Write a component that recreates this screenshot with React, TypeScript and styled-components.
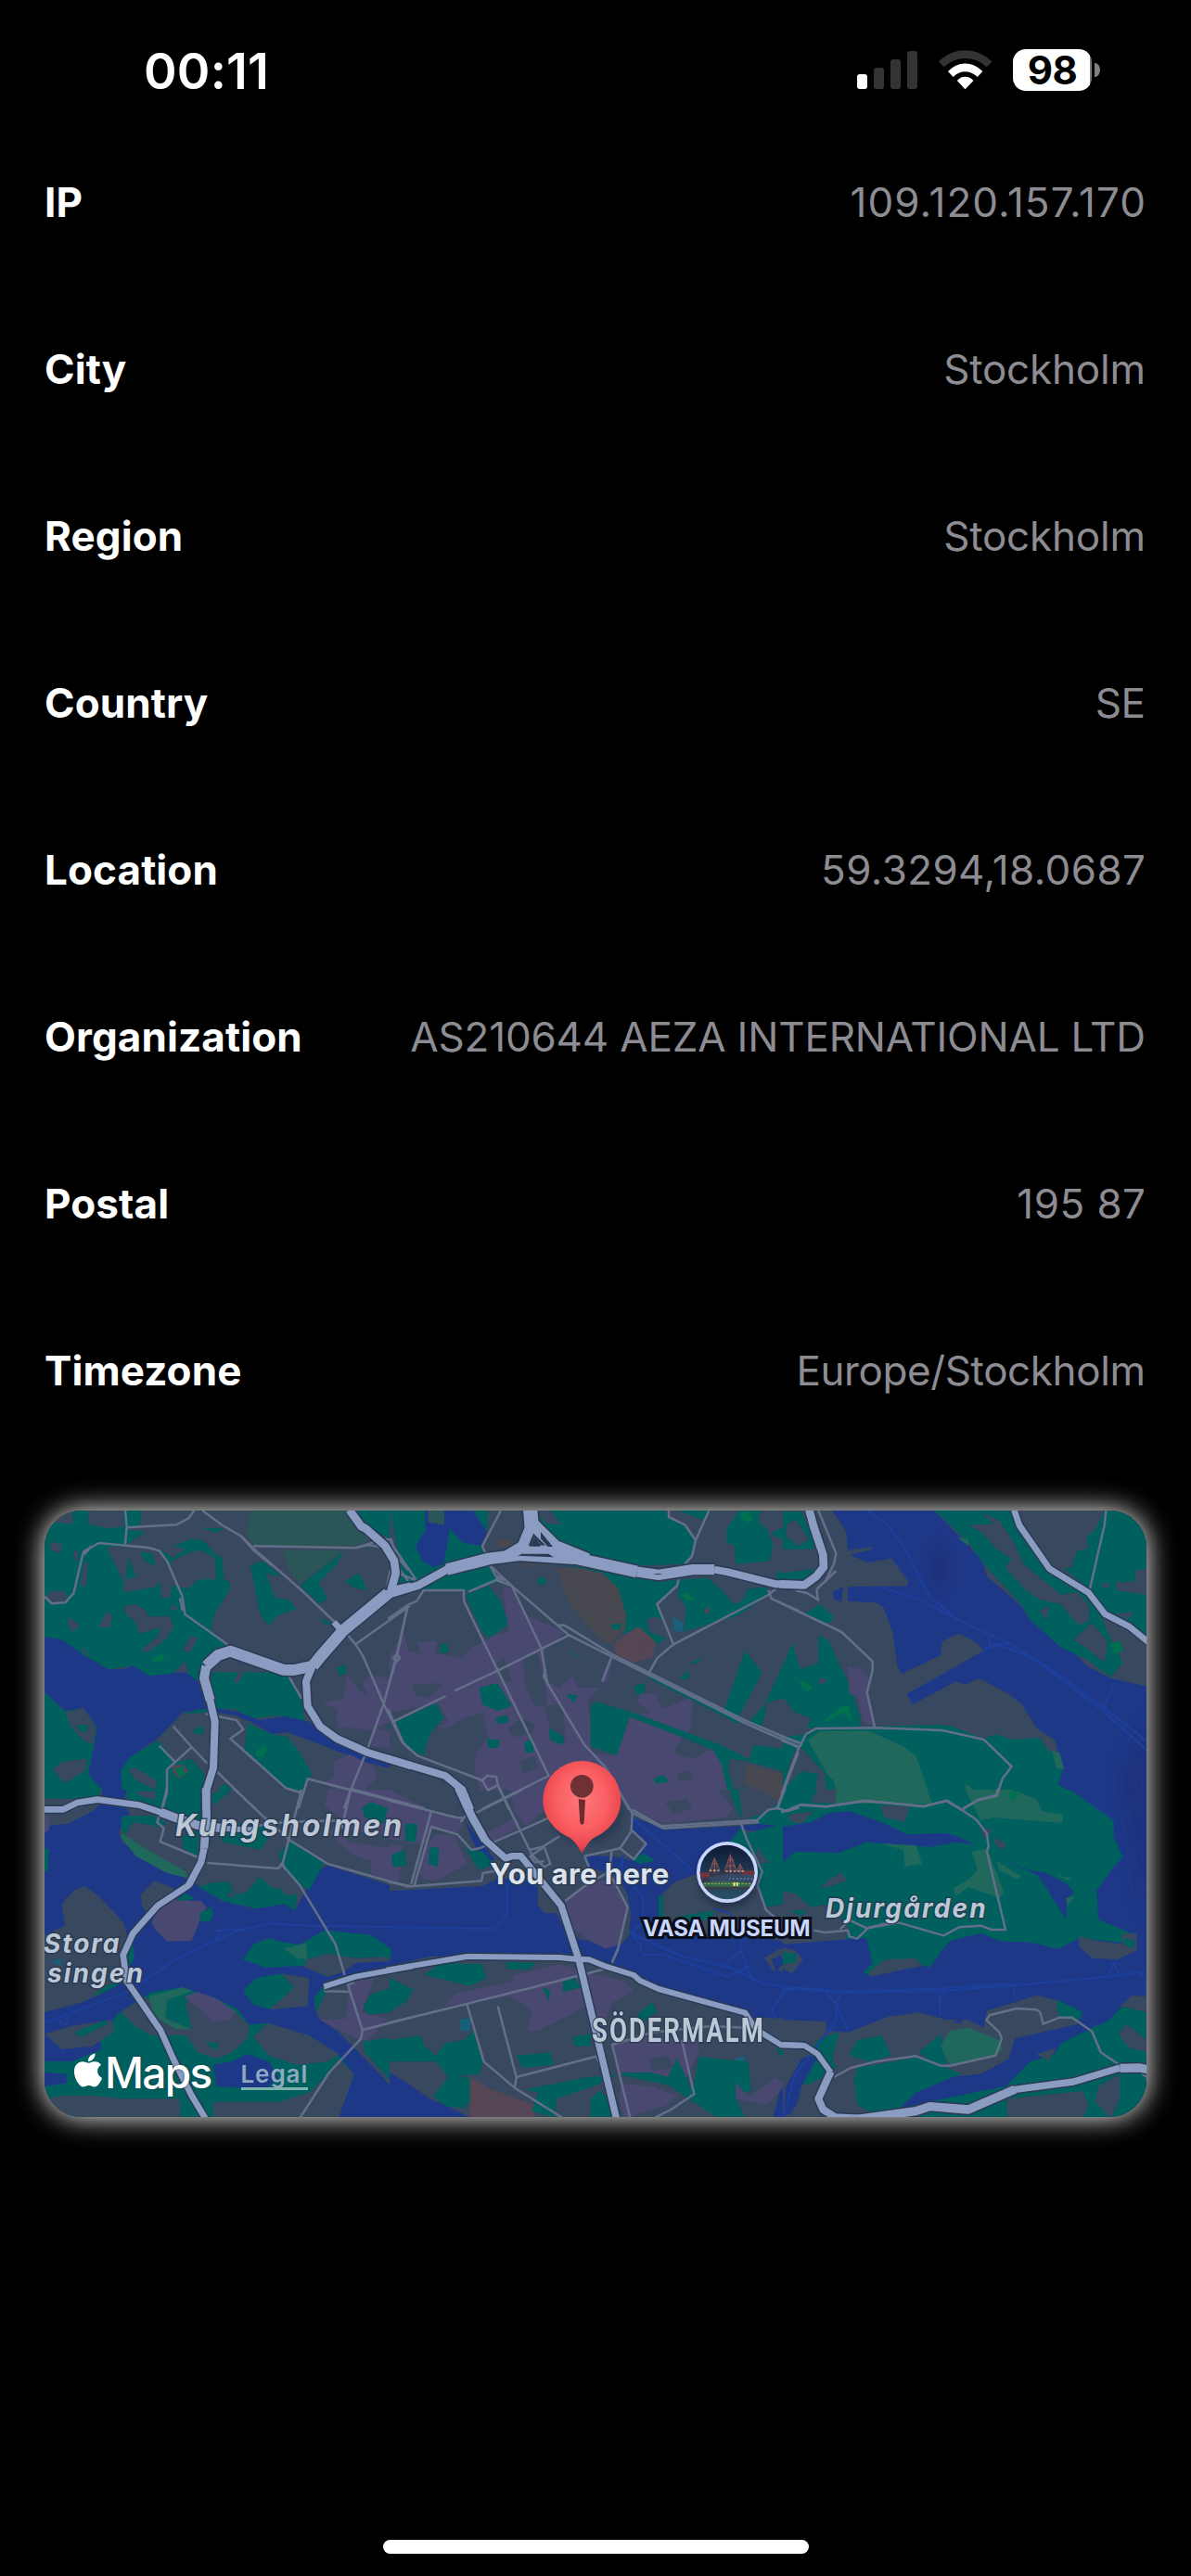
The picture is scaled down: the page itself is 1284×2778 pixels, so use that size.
import React from "react";
import styled, { createGlobalStyle } from "styled-components";
import { FaApple } from "react-icons/fa";

const GlobalStyle = createGlobalStyle`
  * { box-sizing: border-box; }
  html, body { margin: 0; background: #000; }
  body { font-family: Inter, "Liberation Sans", sans-serif; }
`;

const Screen = styled.main`
  width: 1284px;
  height: 2778px;
  display: flex;
  flex-direction: column;
  background: #000;
  overflow: hidden;
`;

const StatusBar = styled.header`
  height: 128px;
  flex: none;
  display: flex;
  justify-content: space-between;
  align-items: flex-start;
  padding: 44px 98px 0 155px;
`;

const Clock = styled.time`
  font-size: 54px;
  font-weight: 600;
  line-height: 66px;
  letter-spacing: 0.2px;
  color: #fff;
`;

const Indicators = styled.div`
  display: flex;
  align-items: center;
  gap: 23px;
  height: 45px;
  margin-top: 9px;
`;

const Battery = styled.div`
  display: flex;
  align-items: center;
  gap: 3px;
`;

const BatteryBody = styled.div`
  width: 85px;
  height: 45px;
  border-radius: 14px;
  background: linear-gradient(90deg, #fff 83px, #777 83px);
  color: #000;
  font-size: 42px;
  font-weight: 700;
  line-height: 45px;
  text-align: center;
  letter-spacing: -0.5px;
`;

const BatteryCap = styled.div`
  width: 6px;
  height: 15px;
  border-radius: 0 6px 6px 0 / 0 8px 8px 0;
  background: #808080;
`;

const Details = styled.dl`
  margin: 0;
  padding: 0 49px 0 48px;
  flex: none;
`;

const DetailRow = styled.div`
  height: 180px;
  display: flex;
  justify-content: space-between;
  align-items: center;
  font-size: 44px;
  white-space: nowrap;
`;

const Term = styled.dt`
  font-weight: 700;
  color: #fff;
  letter-spacing: 0.1px;
`;

const Value = styled.dd<{ $spacing: number }>`
  margin: 0;
  color: #8c8c92;
  font-weight: 400;
  letter-spacing: ${(p) => p.$spacing}px;
  margin-right: ${(p) => -p.$spacing}px;
`;

const MapCard = styled.section`
  position: relative;
  flex: none;
  width: 1188px;
  height: 654px;
  margin: 61px 48px 0;
  border-radius: 40px;
  box-shadow: 0 0 30px #fff;
`;

const MapClip = styled.div`
  position: relative;
  width: 100%;
  height: 100%;
  border-radius: 40px;
  overflow: hidden;
`;

const MapLabel = styled.span<{
  $x: number;
  $y: number;
  $size: number;
  $spacing?: number;
  $color?: string;
  $weight?: number;
  $italic?: boolean;
  $halo?: string;
  $haloWidth?: number;
  $squeeze?: number;
  $family?: string;
}>`
  position: absolute;
  left: ${(p) => p.$x}px;
  top: ${(p) => p.$y}px;
  font-family: ${(p) => p.$family ?? "Inter"}, "Liberation Sans", sans-serif;
  font-size: ${(p) => p.$size}px;
  line-height: ${(p) => p.$size}px;
  font-weight: ${(p) => p.$weight ?? 700};
  font-style: ${(p) => (p.$italic ? "italic" : "normal")};
  letter-spacing: ${(p) => p.$spacing ?? 0}px;
  color: ${(p) => p.$color ?? "#bcc8d6"};
  white-space: nowrap;
  -webkit-text-stroke: ${(p) => p.$haloWidth ?? 3}px ${(p) => p.$halo ?? "rgba(38,54,78,0.75)"};
  paint-order: stroke fill;
  transform: scaleX(${(p) => p.$squeeze ?? 1});
  transform-origin: 0 0;
`;

const Attribution = styled.div`
  position: absolute;
  left: 29px;
  bottom: 23px;
  display: flex;
  align-items: center;
  color: #fff;
  font-size: 46px;
  font-weight: 500;
  line-height: 50px;
  letter-spacing: -1.7px;
  text-shadow: 0 0 3px rgba(20, 40, 60, 0.6);
`;

const AppleMark = styled(FaApple)`
  width: 36px;
  height: 41px;
  margin-top: -5px;
`;

const LegalLink = styled.a`
  margin-left: 32px;
  margin-top: 6px;
  font-size: 26px;
  line-height: 29px;
  font-weight: 600;
  letter-spacing: 0.9px;
  color: #8fa9c0;
  border-bottom: 3px solid #7fb3b0;
  text-shadow: none;
`;

const HomeIndicator = styled.div`
  width: 459px;
  height: 15px;
  border-radius: 8px;
  background: #fff;
  margin: auto auto 24px;
  flex: none;
`;

const C = {
  land: "#38485f",
  park: "#00605e",
  water: "#1e3888",
  city: "#494870",
  meadow: "#20675c",
  field: "#2a5658",
  sport: "#00704f",
  brown: "#484950",
  rust: "#544655",
  pool: "#18607a",
};

type Kind = keyof typeof C;
type Shape = [Kind, string];
type Road = [number, string];

interface Tile {
  x: number;
  y: number;
  w: number;
  h: number;
  base: Kind;
  shapes: Shape[];
  major: Road[];
  minor: string[];
  ferry: string[];
}

/* Each tile is digitised at three units per screen pixel. */
const tiles: Tile[] = [
  {
    x: 0, y: 1580, w: 1263, h: 1053, base: "land",
    shapes: [
      ["park", "144,147 455,147 455,190 410,210 470,215 405,262 520,275 560,300 600,270 560,262 620,238 660,245 700,290 720,300 725,370 745,380 740,410 700,470 680,530 735,580 700,600 650,650 640,700 480,690 430,650 350,660 280,620 220,580 144,560"],
      ["land", "285,147 400,147 400,200 345,205 285,190"],
      ["land", "180,155 235,152 235,190 175,185"],
      ["land", "345,265 400,262 515,275 545,320 560,370 550,430 520,430 520,380 500,395 400,412 398,370 370,320"],
      ["park", "415,300 440,362 405,370"],
      ["park", "450,280 490,285 505,330 470,310"],
      ["land", "555,310 620,280 650,275 695,300 700,370 640,370 610,400 560,390 545,340"],
      ["land", "160,250 200,255 195,285 165,275"], ["land", "240,280 255,275 250,310 238,305"],
      ["land", "270,320 285,310 280,390 258,390"], ["land", "160,410 200,405 220,425 200,450 165,450 150,430"],
      ["land", "225,490 258,520 235,540 220,515"], ["land", "345,475 365,490 355,525 318,525"],
      ["land", "400,455 440,450 470,470 480,490 550,490 562,520 540,560 480,605 455,600 510,555 520,525 450,545 440,510 405,480"],
      ["land", "620,550 640,560 615,605 590,600"], ["land", "600,635 612,677 560,672"], ["land", "258,588 280,600 285,622"],
      ["land", "550,465 560,450 575,465 560,470"],
      ["sport", "490,625 530,610 530,630 500,640"],
      ["water", "144,556 200,565 280,620 350,660 400,660 430,648 480,682 600,670 640,700 670,790 590,800 510,885 420,945 390,990 400,1060 400,1110 330,1110 330,1050 285,1000 285,920 315,850 270,790 210,795 144,735"],
      ["park", "144,735 210,797 270,785 315,850 300,930 285,1000 330,1050 330,1080 144,1080"],
      ["land", "215,800 270,785 312,850 300,905 270,890 225,840"], ["park", "250,840 285,840 280,865 255,860"],
      ["land", "170,985 200,960 280,950 280,985 210,1030"],
      ["park", "390,990 420,945 510,890 540,925 565,960 620,950 660,1000 655,1110 400,1110"],
      ["land", "415,985 440,980 505,1020 505,1050 440,1020"], ["park", "630,850 660,845 655,870 625,870"],
      ["park", "700,1050 730,1030 760,1060 720,1110 690,1110"],
      ["rust", "555,970 592,970 610,990 580,1015 560,995"], ["sport", "565,980 590,975 600,1000 580,1010"],
      ["park", "680,670 900,670 940,690 975,760 985,830 900,810 820,820 760,790 700,790"],
      ["land", "780,655 805,650 770,705 755,700"], ["park", "590,805 640,790 670,790 670,800"],
      ["water", "700,788 760,795 840,825 920,812 1000,830 1060,870 1180,940 1320,980 1320,995 1180,960 1000,890 930,865 880,870 820,835 760,810 700,800"],
      ["park", "800,835 880,870 930,880 970,930 1010,1000 990,1020 975,1060 925,1045 790,930"],
      ["sport", "828,925 855,905 866,915 850,945 830,940"],
      ["park", "650,203 725,205 700,218"], ["park", "810,325 850,310 910,360 860,350 890,430 935,435 960,465 900,485 870,520 840,480"],
      ["field", "810,147 1115,147 1200,240 1150,262 825,262 797,230"], ["field", "915,275 1110,275 970,385 930,330"],
      ["park", "970,390 1110,280 1090,320 1030,380 1060,430 1035,450"], ["park", "1115,375 1160,350 1190,405 1140,395"],
      ["park", "1150,147 1320,147 1320,330 1270,250 1250,235 1190,195"], ["park", "1035,490 1075,515 1050,515"],
      ["park", "1090,655 1115,645 1120,670 1100,685"],
      ["city", "1290,540 1320,540 1320,800 1220,850 1200,860 1140,850 1090,850 1090,790 1040,770 1110,755 1120,680 1150,710 1160,730 1190,745 1170,700 1200,680 1270,690"],
      ["city", "1210,850 1280,870 1300,920 1200,910"],
      ["city", "1080,960 1130,935 1210,975 1220,1010 1180,1050 1100,1110 1050,1080 1090,1050 1040,1030 1080,1010"],
      ["park", "1270,830 1320,810 1320,870 1250,850"],
    ],
    major: [
      [26, "1130,145 1168,198 1182,205 1245,260 1275,310 1280,350 1265,405"],
      [26, "1330,392 1285,402 1250,418"],
      [38, "1255,415 1110,535 1040,615 1012,650"],
      [36, "1012,650 950,663 915,662 745,602 705,615 667,650"],
      [30, "667,650 660,690 680,760"],
      [24, "678,755 695,830 690,980 668,1050 666,1112"],
      [24, "1010,650 990,700 995,780 1035,845 1090,885 1190,930 1330,973"],
      [20, "1080,508 1100,530"],
    ],
    minor: [
      "405,147 410,200 405,258", "410,202 570,193 610,172 628,147",
      "144,425 168,448 210,445 238,415 270,280 320,252 480,267 515,277 540,310 590,425 598,482 735,580",
      "272,290 295,262", "582,430 590,470", "655,147 715,192 780,230 820,270 970,400 1085,510", "780,230 820,275 880,325",
      "820,262 1150,268 1240,240 1265,240 1280,290 1320,340", "1150,268 1190,258 1240,266", "1280,320 1320,375", "1262,340 1252,390",
      "1125,550 1150,580 1175,620 1240,770 1300,895 1325,920", "1150,580 1325,455",
      "1318,455 1283,620 1240,775 1190,915 1135,1050 1112,1112", "1283,612 1294,624 1283,636 1272,624 1283,612",
      "560,845 620,912 670,965", "700,990 825,1112", "515,908 568,962", "620,912 540,985 540,1060 525,1112",
      "665,805 765,825 787,855 745,885 925,1045 975,1060", "1325,1100 995,1015 965,1112", "935,685 975,755",
    ],
    ferry: [],
  },
  {
    x: 420, y: 1580, w: 1275, h: 1053, base: "land",
    shapes: [
      ["park", "0,147 320,147 315,215 295,262 310,280 180,330 100,375 0,420 40,340"],
      ["land", "360,147 335,190 300,262 310,285 390,262 430,225 435,147"],
      ["water", "115,147 270,147 315,215 295,262 235,250 195,205 175,320 140,330 105,310 85,260 115,215"],
      ["field", "125,147 177,147 177,193 125,185"],
      ["park", "480,147 895,147 900,170 955,190 990,240 975,300 960,320 800,325 660,295 550,250 495,190"],
      ["land", "480,147 520,147 555,192 505,190"], ["brown", "345,245 370,237 398,245 395,262 340,268"],
      ["park", "1090,205 1130,147 1200,147 1230,230 1240,260 1230,310 1120,320 1115,260 1090,250"],
      ["land", "1195,160 1215,150 1250,180 1230,215 1195,185"],
      ["sport", "1130,160 1160,150 1175,175 1155,188"], ["park", "930,147 1030,147 1020,180"],
      ["park", "1240,215 1280,200 1285,240 1240,230"], ["park", "1255,345 1320,340 1320,375 1250,370"],
      ["park", "540,325 620,330 700,345 870,378 940,370 930,395 865,445 885,500 855,490 830,500 840,540 895,560 865,580 810,525 760,545 760,480 740,400 690,350 630,335"],
      ["brown", "540,330 620,335 690,350 740,400 765,485 760,530 720,575 690,570 600,470 575,430"],
      ["brown", "415,320 500,320 440,330"], ["park", "715,515 750,512 745,535 722,530"],
      ["rust", "725,575 805,522 860,570 850,620 790,640 730,610"], ["rust", "825,580 860,575 850,625 815,620"],
      ["park", "940,370 1030,365 1080,410 1110,450 1140,440 1160,400 1220,395 1225,420 1130,485 950,540 960,460 930,420"],
      ["sport", "945,420 960,412 990,435 960,440"], ["pool", "915,490 950,510 945,540 920,535"], ["rust", "1015,470 1035,458 1030,485"],
      ["park", "150,350 320,325 360,375 255,410 110,402"], ["park", "245,420 320,390 360,440 385,515 320,560 300,540 275,490"],
      ["park", "475,375 490,358 508,375 490,392"],
      ["city", "0,620 45,540 60,600 100,610 90,570 150,570 150,610 235,625 270,590 350,545 385,540 365,395 395,395 450,490 570,540 500,600 510,700 550,720 590,680 610,720 650,720 720,630 710,690 640,760 650,830 650,930 730,940 780,810 850,800 800,770 810,740 860,740 880,790 980,750 975,850 940,890 920,930 980,950 1060,910 1100,1000 1110,1110 780,1110 700,980 640,1050 300,1080 270,970 290,900 240,860 140,855 190,830 160,770 0,800"],
      ["land", "70,710 170,705 130,755 85,745"], ["land", "430,620 480,610 505,720 510,780 470,780 440,720"],
      ["land", "240,820 300,800 320,880 280,930 270,1000 130,960 130,850 190,850"], ["land", "500,780 560,770 570,900 520,850"],
      ["land", "345,640 370,620 395,700 370,700"], ["land", "380,850 430,820 470,840 460,870 400,880"], ["land", "420,960 470,940 480,980 430,1000"], ["land", "640,640 700,620 690,720 620,720 610,690"],
      ["park", "165,580 185,575 190,605 165,610"], ["park", "290,720 350,705 395,780 350,795 300,775"],
      ["park", "342,818 380,808 387,830 350,838"], ["park", "315,885 355,890 350,915 320,915"], ["park", "435,900 465,880 465,930 440,930"],
      ["park", "515,850 565,880 560,905 520,890"], ["park", "572,740 608,745 595,770"], ["park", "575,590 625,630 600,615"],
      ["park", "650,780 670,765 780,805 735,940 650,910"], ["park", "20,830 150,770 175,815 130,870 110,940 60,920"],
      ["park", "790,715 825,705 825,735 800,745"], ["park", "855,1015 885,1002 905,1025 860,1030"],
      ["land", "945,905 990,895 1010,940 950,945"], ["land", "930,1000 970,990 980,1015 940,1025"],
      ["park", "700,775 800,805 1070,905 1150,945 1170,960 1100,950 1095,985 1130,1110 1105,1110 1075,970 1045,920 920,870 790,820"],
      ["park", "1180,905 1290,920 1270,990 1160,960"], ["brown", "1160,970 1280,1000 1250,1090 1145,1030"],
      ["park", "1125,1045 1200,1060 1180,1068"],
      ["park", "1080,800 1120,680 1150,600 1180,640 1205,670 1180,720 1130,810"], ["park", "1150,840 1220,770 1215,810 1200,850"],
      ["park", "1215,770 1300,580 1320,590 1320,750 1250,760"], ["park", "935,690 970,665 965,695"], ["park", "970,640 1015,622 990,642"],
      ["park", "835,675 1140,825 1130,838 840,690"],
    ],
    major: [
      [26, "-10,420 95,388 190,335"], [38, "185,338 320,303 420,290 610,303 800,345"],
      [34, "800,345 870,355 980,338 1050,338"], [24, "1050,338 1095,346 1250,385 1335,388"],
      [46, "455,145 460,205"], [34, "460,190 430,262 380,292"], [40, "462,190 535,262 640,305"], [22, "420,272 540,270"],
      [24, "-10,948 180,1005 235,1050 262,1115"],
    ],
    minor: [
      "360,147 300,262 310,285", "325,325 350,370 372,365", "240,440 240,405 110,405 88,440 60,452 -5,497", "60,452 22,620 -5,720",
      "255,410 345,372 395,390 490,590 510,705 630,905 700,980 775,1115", "345,372 350,360 370,375", "325,325 400,395 580,550 1150,835 1325,912",
      "545,518 565,518 720,612 1150,826 1325,900", "240,440 350,665 515,1005 300,1112", "580,550 350,665 210,730", "182,747 12,830",
      "-5,790 45,900 90,940 300,1020 315,1005 345,1008 350,1035 318,1052 300,1020", "350,1035 387,1115", "720,615 688,700", "505,660 498,685 512,705",
      "903,147 903,168 955,193 990,243", "1033,147 990,243 978,295 955,320", "935,370 930,390 865,450 918,580 865,625 835,680",
      "918,580 1225,420 1250,400", "1225,405 1235,432 1325,472", "1322,930 1252,1112", "0,240 12,262 85,370", "25,350 85,372", "-5,1082 110,1110",
    ],
    ferry: [],
  },
  {
    x: 844, y: 1580, w: 1176, h: 1053, base: "land",
    shapes: [
      ["water", "160,147 490,147 530,190 600,260 645,310 660,360 770,455 800,500 890,580 940,605 985,650 1060,690 1176,715 1176,1110 985,1110 960,1070 890,1035 905,985 890,930 880,890 850,880 820,850 770,770 720,735 635,690 590,710 560,700 420,775 400,740 510,680 650,600 620,570 570,545 515,570 510,615 385,675 370,650 355,540 325,460 300,445 210,440 210,395 310,385 400,390 405,375 350,300 270,315 220,290 290,270 210,275 205,215"],
      ["land", "205,277 286,264 286,274 240,282 290,310 350,302 405,378 400,391 210,393"],
      ["water", "217,290 270,278 350,302 275,315"], ["water", "160,410 195,393 190,443 165,435"],
      ["park", "490,147 700,147 780,260 830,330 1000,420 1060,560 1100,640 1060,685 985,630 900,590 800,500 770,450 650,320 600,250"],
      ["land", "640,150 700,180 740,240 780,320 840,370 900,420 950,410 990,450 990,500 960,520 930,490 900,450 830,435 780,400 720,330 740,305 690,270 640,215 600,195 680,190"],
      ["park", "700,147 740,147 790,240 860,345 950,405 900,420 840,370 780,320 745,240"],
      ["land", "830,470 860,455 855,500"], ["land", "940,565 1000,510 1050,570 1040,640 980,590"],
      ["park", "1040,147 1130,147 1176,200 1176,550 1130,520 1040,470 1000,410 910,335 935,330 950,280 985,270 985,230 1010,210"],
      ["land", "1140,340 1176,335 1176,420 1080,405 1075,380 1140,375"], ["land", "1025,388 1060,378 1050,400"], ["land", "1075,480 1135,475 1115,500"],
      ["land", "1130,155 1160,170 1165,195"],
      ["sport", "1055,575 1090,570 1102,600 1075,612"], ["meadow", "565,235 600,240 600,262"],
      ["park", "0,150 60,150 100,240 100,272 0,272"], ["land", "10,195 40,175 85,240 50,262 10,230"], ["park", "0,350 100,335 100,372 0,375"],
      ["park", "65,485 120,450 165,490 150,512"],
      ["park", "115,550 150,570 180,640 210,700 250,810 250,850 75,850 90,820 40,800 0,750 0,650 30,575 50,640 60,660 115,640"],
      ["land", "118,690 140,690 135,710 118,705"], ["land", "0,770 40,800 90,820 70,870 0,880"],
      ["sport", "50,705 70,700 95,718 80,735"], ["sport", "135,825 190,780 215,780 222,830 195,800 145,832"],
      ["city", "210,650 250,660 280,690 275,750 300,845 260,830 240,745 215,740"],
      ["park", "75,870 110,850 510,840 545,845 650,885 690,870 740,888 830,883 880,930 905,985 890,1035 960,1070 990,1110 0,1110 0,880"],
      ["land", "820,850 880,890 885,930 860,925 830,885"],
      ["meadow", "80,890 120,860 280,860 390,910 430,940 490,1110 170,1110 150,1010"],
      ["land", "50,905 130,990 170,1040 170,1110 90,1110 115,1000 60,990 0,1050 30,940"],
      ["park", "135,1000 165,1020 168,1062 140,1050"],
      ["meadow", "590,1028 650,1075 840,1075 840,1110 600,1110"], ["meadow", "870,925 895,930 910,985 885,980"], ["sport", "725,1065 745,1045 765,1065 745,1090"],
    ],
    major: [
      [26, "85,145 100,200 130,290 132,330 108,360 70,388 -10,385"],
      [20, "748,145 765,195 862,335 988,412 1042,482 1120,522 1185,575"],
    ],
    minor: [
      "115,147 172,285 165,320 138,375 110,400 112,435", "172,342 135,378", "40,405 80,415 118,438", "-5,447 190,540 290,635 290,665 272,735 297,848",
      "-5,878 60,900", "-5,890 52,914 60,900", "52,914 -5,1065",
      "55,910 75,870 108,852 300,850 515,858 650,888 740,975 710,1015 692,1070 630,1083 578,1115 530,1085 455,1105 265,1085 140,1105 60,1100",
      "1045,147 1040,195 992,405",
    ],
    ferry: [
      "275,147 340,195 395,270 475,425 560,495", "310,393 445,435 570,503 740,580 905,685 1180,895", "668,548 668,585 650,600",
      "668,585 700,578 740,580", "650,600 690,585 720,588 820,632 1040,800 1180,925", "1072,705 1040,775 1050,800", "1015,775 1040,775",
    ],
  },
  {
    x: 0, y: 1930, w: 1263, h: 1062, base: "water",
    shapes: [
      ["land", "144,0 330,0 330,40 300,70 220,110 165,115 144,130"], ["park", "144,0 330,0 320,20 220,30 144,28"],
      ["city", "144,85 160,85 158,130 144,140"],
      ["land", "395,110 420,80 400,40 410,0 1270,0 1270,312 1060,245 1030,260 985,330 955,390 920,370 830,385 720,360 640,310 600,285 500,235 395,170 385,140"],
      ["park", "408,0 655,0 650,100 560,90 450,50 410,40"], ["land", "440,5 500,5 505,30 460,25"],
      ["park", "395,85 500,85 540,110 520,120 430,105 400,150 390,110"],
      ["meadow", "388,150 400,145 470,190 600,265 605,285 540,270 440,215"], ["park", "590,150 640,130 640,215 590,190"],
      ["park", "690,50 750,0 720,0 685,15"], ["park", "700,110 860,110 870,150 845,195 720,170"],
      ["park", "940,165 1050,235 1000,325 960,300 920,260 900,210"],
      ["park", "640,315 690,300 740,298 760,340 800,330 840,282 880,318 910,320 920,340 960,340 955,392 920,370 830,385 720,360"],
      ["land", "735,345 745,325 760,352"],
      ["city", "1060,0 1270,0 1270,300 1200,270 1200,230 1140,210 1060,140 1105,100 1050,50"],
      ["land", "1090,130 1270,150 1270,190 1130,170"], ["park", "1170,60 1200,40 1255,60 1240,110 1180,90"],
      ["land", "275,312 320,345 400,430 410,470 430,540 410,590 390,620 330,660 260,690 144,720 144,470 210,440 200,370 240,325"],
      ["park", "295,670 345,632 400,620 350,650"], ["pool", "160,552 200,548 195,570"], ["park", "420,480 435,520 430,560 410,575"], ["park", "144,190 158,190 155,260 144,265"],
      ["land", "455,340 500,295 540,310 590,335 560,370 490,410 460,380"], ["park", "555,370 600,335 630,350 580,370"],
      ["city", "490,430 520,370 560,358 650,360 668,380 650,410 640,440 620,490 540,490 500,450"], ["park", "645,400 685,378 688,405 680,428 650,425"],
      ["park", "785,550 820,500 870,480 920,495 970,500 1050,455 1200,470 1270,520 1260,550 1150,545 1110,590 1060,605 980,570 860,575"],
      ["land", "990,550 1060,530 1150,545 1250,540 1260,555 1150,560 1110,590 1060,605 985,575"], ["meadow", "920,515 990,495 995,550 960,545"],
      ["park", "785,650 830,610 910,595 1000,610 990,700 880,712 820,695"], ["land", "910,595 1000,610 995,700 870,712 920,670 950,640"],
      ["park", "380,725 490,655 590,640 710,680 770,710 805,760 865,755 1000,795 1095,860 1145,920 1095,1062 144,1062 144,960 215,950 215,920 144,915 144,880 230,880 330,840 320,800 370,740"],
      ["water", "690,890 750,880 800,855 870,880 900,930 860,970 700,960"],
      ["land", "390,720 470,670 540,740 620,775 600,690 640,660 760,720 805,760 800,805 750,850 700,870 640,850 600,795 490,795 445,770"],
      ["meadow", "480,670 590,640 622,652 540,680 535,740 620,775 570,775 500,735"], ["city", "595,670 640,655 700,675 765,720 740,745 690,755 650,710"],
      ["park", "665,815 705,820 705,840 685,838"],
      ["land", "820,800 865,755 1000,795 1095,855 1060,880 960,890 870,860"],
      ["land", "690,1010 900,1010 1000,980 1060,920 1095,870 1145,920 1095,1062 690,1062"], ["land", "144,1000 200,990 300,990 400,1000 580,1000 585,1062 190,1062"],
      ["land", "144,790 230,765 360,745 370,780 300,830 200,840"], ["park", "240,785 340,745 350,758 260,800"],
      ["land", "1015,690 1050,620 1120,600 1270,590 1270,965 1200,890 1150,840 1090,780 1030,740"],
      ["park", "1055,625 1115,600 1145,620 1060,645 1022,720 1018,670"],
      ["city", "1130,620 1210,610 1170,720 1250,740 1210,790 1180,815 1120,790 1035,745 1120,740"],
      ["park", "1175,700 1200,660 1270,640 1270,720 1190,728"], ["park", "1175,815 1270,800 1270,950 1180,850"],
    ],
    major: [
      [20, "140,64 205,64 250,42 315,32 450,50 525,75"], [28, "520,73 570,92 640,115 720,125"], [18, "720,125 800,130 825,128"],
      [26, "666,-5 668,90 660,190"], [22, "660,190 650,235 610,310"], [20, "612,308 510,375 430,465 398,535 410,620 520,780 560,870 620,990 668,1070"],
      [18, "1048,637 1150,605 1335,571"],
    ],
    minor: [
      "540,-5 525,55 508,105 530,125 518,168 655,225", "670,237 900,255 915,235 975,0", "900,255 915,240 922,258", "755,-5 850,85 940,165 1060,240 1325,315",
      "1105,125 1135,-2 1325,48", "935,-2 975,10", "910,240 970,310 1085,500 1115,600", "1050,640 1052,652 1130,654", "1145,625 1125,630 1172,778 1168,805 1065,915 970,1062",
      "1172,778 1325,738", "825,118 920,105 1105,100", "655,165 695,140",
    ],
    ferry: ["144,752 215,728 410,655 575,545 760,460 870,433 1000,440 1265,444", "695,457 800,450", "710,457 695,490", "180,742 215,762 218,730"],
  },
  {
    x: 420, y: 1930, w: 1275, h: 1062, base: "land",
    shapes: [
      ["city", "0,0 140,70 240,100 220,145 130,120 125,180 0,160"], ["city", "80,240 150,145 210,150 250,240 150,295 110,290"],
      ["city", "390,0 480,0 530,0 530,60 480,80 440,120 400,60"], ["city", "255,150 330,130 410,90 425,120 310,180"], ["city", "0,180 40,180 30,300 0,290"],
      ["park", "50,110 90,110 85,170 50,165"], ["park", "5,210 50,195 55,245 10,250"], ["park", "130,185 160,190 155,250 125,240"],
      ["city", "740,0 1060,0 1110,60 1090,90 890,110 790,70"], ["land", "890,40 960,30 980,60 920,80"], ["park", "1100,0 1130,0 1140,100 1120,60"],
      ["park", "1165,90 1230,70 1275,20 1275,120 1180,115"], ["brown", "1200,0 1275,0 1260,38"],
      ["water", "205,0 250,110 290,160 340,225 310,240 265,160 240,90"], ["park", "245,190 300,200 340,240 290,260 270,230"],
      ["water", "0,328 300,312 345,290 420,285 460,290 480,320 478,370 500,400 540,400 560,440 600,480 690,500 750,500 775,470 780,400 770,340 740,280 640,250 640,215 720,215 790,230 830,180 785,125 785,90 830,105 890,130 1130,118 1200,110 1275,120 1320,115 1320,225 1200,200 1190,300 1240,430 1320,490 1320,740 1180,738 1140,715 880,640 800,600 720,565 650,545 440,545 250,535 130,540 0,570"],
      ["city", "560,370 640,300 720,290 770,380 745,500 700,515 650,490 580,440"],
      ["land", "870,350 920,300 1000,270 1080,180 1150,130 1275,150 1275,490 1180,475 950,470 880,430"],
      ["park", "870,345 885,340 885,430 870,430"], ["park", "1190,240 1275,230 1275,370 1220,380 1195,320"], ["park", "1085,185 1140,120 1190,180 1180,240 1130,180"],
      ["park", "925,412 1050,390 1040,420 950,425"], ["park", "1160,140 1275,110 1275,240 1220,230"],
      ["land", "1212,545 1260,515 1320,520 1300,590 1240,585"], ["water", "1235,550 1265,535 1275,560 1250,590"], ["park", "780,225 820,205 860,230 810,240"],
      ["park", "0,510 8,520 0,550"], ["land", "480,320 520,300 560,360 540,400 500,390"],
      ["park", "375,558 475,560 450,582 380,580"], ["park", "110,600 170,560 300,565 312,610 260,635 200,620"],
      ["city", "400,600 550,565 680,600 760,620 790,650 720,690 690,760 640,700 480,780 445,780 460,720 430,690 380,670 180,700 210,660 400,620"],
      ["park", "560,620 600,610 620,640 560,655"], ["park", "495,640 520,650 515,685"], ["park", "0,610 75,645 60,680 0,720"],
      ["pool", "228,742 262,740 260,782 230,780"], ["pool", "1115,870 1145,862 1150,880 1125,885"],
      ["park", "0,810 100,795 115,830 150,860 180,820 240,810 270,780 300,880 290,920 190,930 150,880 0,880"],
      ["park", "410,860 520,850 530,890 430,900"], ["park", "140,990 200,920 270,935 270,1000 240,1030 180,1025"],
      ["rust", "260,930 330,970 470,1020 470,1062 260,1062"], ["water", "0,915 60,950 130,1000 200,1030 260,1062 0,1062"],
      ["park", "440,970 640,930 740,920 660,960 540,1000 535,1062 460,1040 480,980"], ["park", "650,1000 680,975 725,1010 720,1062 650,1062"],
      ["park", "590,800 650,790 650,830 600,830"], ["park", "800,730 850,685 865,720 820,750"],
      ["city", "720,820 850,800 1000,810 1000,850 960,930 900,940 740,915"], ["land", "840,870 900,860 920,900 850,910"],
      ["city", "750,950 850,960 930,990 900,1020 760,1062 740,1000"], ["park", "755,915 850,915 900,930 930,870 980,975 1000,865 1160,880 1170,970 1120,1000 1150,1062 1060,1062 900,955 750,925"],
      ["city", "1120,945 1160,995 1250,930 1280,960 1220,1020 1120,1000"],
      ["water", "1240,1062 1260,980 1320,890 1320,1062"], ["park", "1250,830 1320,835 1300,860 1260,860"],
    ],
    major: [
      [26, "222,-8 265,85 310,165"], [22, "308,162 375,222 395,215 425,215 445,240 555,375 612,550 735,1070"],
      [18, "-10,584 250,540 550,543 600,548 645,550 700,572 790,600 810,618 870,645 1150,722 1185,775 1265,825 1335,827"],
    ],
    minor: [
      "-5,34 215,90 240,92", "230,105 245,85", "135,70 70,305", "-5,298 70,313 298,295 302,270 350,262", "80,310 135,120 220,145 265,195 290,190 440,125 550,75",
      "280,75 430,0", "355,-5 460,210 500,250 520,240 500,185 455,215 470,235 500,232", "450,195 495,185 550,150", "735,-5 785,75 885,125 1195,105",
      "785,65 880,118 1190,98 1225,65 1255,60 1280,-5", "1255,60 1285,70 1325,58", "1135,105 1155,160 1205,265 1190,310 1218,390 1245,412",
      "785,75 782,130 830,175 790,225 745,190 785,130", "630,215 745,190", "630,215 645,250", "718,200 712,265 640,305 568,360", "720,285 770,380 740,510 720,560",
      "-5,755 250,693 480,635 715,575", "250,693 305,880 405,965 560,1062", "350,700 410,930 405,965", "410,930 668,863 680,888", "778,1062 720,825 850,785 1040,765 1150,770",
      "945,810 985,985 910,1035 860,1060", "740,515 720,555",
    ],
    ferry: [
      "0,445 340,450 380,400 380,310 400,290", "790,95 980,260", "755,210 750,270", "780,300 820,350 820,430 780,465 950,540 1100,575 1200,625 1325,645",
      "780,465 810,500 820,535 890,535 1090,605 1170,570", "1050,385 1100,400 1140,480 1135,520 1080,570", "1135,520 1170,610", "1325,643 1280,650 1235,715 1250,740",
    ],
  },
  {
    x: 844, y: 1930, w: 1176, h: 1062, base: "water",
    shapes: [
      ["park", "0,0 930,0 1000,50 1070,100 1070,150 1100,220 1070,250 1015,325 960,320 920,305 850,270 800,260 700,225 650,190 560,150 520,140 400,145 330,110 220,70 150,75 90,105 0,120"],
      ["meadow", "170,0 465,0 485,45 170,45"], ["meadow", "590,0 740,0 820,30 840,70 905,80 905,108 680,90 640,100 620,60"],
      ["sport", "725,15 745,0 765,15 745,40"], ["land", "110,0 172,0 170,45 90,40"], ["land", "20,80 100,70 60,110 20,100"],
      ["land", "315,50 408,55 395,105 330,90"], ["land", "640,125 680,130 650,160"], ["land", "680,155 725,175 710,195 690,180"],
      ["park", "0,235 40,200 180,205 270,170 400,180 480,185 560,170 650,180 700,225 800,265 830,280 860,330 915,420 920,360 940,330 915,300 1015,325 1020,420 1140,470 1140,500 960,480 890,515 810,495 700,490 640,465 540,490 500,540 475,575 400,550 280,600 260,590 290,560 270,480 100,490 0,490"],
      ["water", "820,270 900,300 935,330 918,360 915,418 870,345"],
      ["land", "0,330 40,335 90,380 150,370 215,450 200,485 0,500"], ["park", "20,390 75,390 60,410"], ["land", "120,320 150,290 190,268 205,295 165,310"],
      ["land", "280,590 330,550 430,545 450,570 280,605"], ["land", "955,475 1020,490 1100,500 1100,465 1145,465 1145,520 1080,550 1000,545 960,510"],
      ["park", "1105,480 1142,490 1130,515 1105,500"],
      ["meadow", "320,175 430,180 450,240 395,250 390,195"], ["meadow", "610,200 660,190 715,330 700,350 600,315 560,345 550,320 600,290 630,260"],
      ["meadow", "690,230 770,280 760,290 700,260"], ["meadow", "880,275 930,285 925,295"], ["meadow", "915,350 945,345 920,375"],
      ["land", "0,510 40,520 65,550 30,595 0,580"], ["park", "0,525 42,530 42,558 0,565"],
      ["land", "0,745 140,750 140,780 210,785 340,735 440,720 530,745 600,745 650,770 660,715 760,685 820,665 890,682 970,730 950,760 860,800 750,805 750,860 640,920 550,930 430,980 380,1030 250,1060 0,1060"],
      ["park", "890,680 970,720 960,745 900,740 885,710"], ["park", "215,860 240,810 320,795 350,860 280,880"], ["park", "440,850 510,790 530,890 480,880"],
      ["meadow", "510,830 540,780 600,770 700,810 712,840 690,860 540,890"],
      ["park", "110,810 180,785 160,870 170,900 130,960 60,950 80,880"], ["park", "230,940 240,900 440,865 580,920 430,980 380,1030 300,1050 240,1020"],
      ["water", "0,1060 10,960 60,870 90,860 110,870 60,960 40,1040"], ["land", "70,960 130,930 100,1040 20,1060 50,1010"],
      ["park", "400,1060 400,1020 520,1000 650,970 720,960 800,880 880,855 900,820 1000,770 1050,750 1100,700 1176,665 1176,1062"],
      ["water", "380,1030 430,980 550,930 720,910 750,805 950,760 1000,770 900,820 870,860 800,875 720,960 640,975 520,1000 430,1020"],
      ["land", "1090,700 1130,665 1176,670 1176,720"], ["land", "1085,790 1110,758 1176,810 1176,850 1120,835"],
      ["land", "725,1000 970,975 990,1020 970,1062 725,1062"], ["land", "1020,960 1090,920 1090,1000 1060,1062 1010,1010"],
      ["land", "820,855 885,835 860,878"], ["water", "550,755 585,735 575,755"],
    ],
    major: [
      [18, "-10,826 70,828 112,855 155,915"], [24, "155,912 115,1000 130,1035 170,1060 260,1064"],
      [28, "240,1066 430,1040 475,1025 600,1035 750,970"], [22, "745,971 940,945 1090,900"], [28, "1090,901 1155,900 1185,906"],
    ],
    minor: [
      "-5,74 60,48 140,55 265,37 455,53 530,37 578,65 625,97 660,142 665,185 660,200 720,453 675,453 640,440 570,445 520,472 375,430 275,448 240,482 215,475 210,455 135,462 100,455",
      "185,452 215,422 275,450", "375,430 325,435 275,448", "578,65 635,32 690,18 697,-5",
      "165,930 220,900 300,880 430,862 510,893 540,893 688,860 708,805 700,785 658,745 668,730 755,708 820,712 832,720 842,758 895,737 935,737 1000,782 1028,850 1085,888",
      "1155,912 1176,930",
    ],
    ferry: [
      "-5,642 190,657 500,652 760,632 1080,602 1180,585", "-5,655 40,640 190,652 480,645 740,628", "135,655 172,690 210,780", "190,655 172,690 175,745 110,830 40,920 0,1060",
      "490,655 508,672 508,730", "522,655 508,672", "742,632 752,680", "1055,600 1070,560 1088,600", "1150,590 1176,615 1172,660",
    ],
  },
];

const place = (t: Tile) => `translate(${t.x} ${t.y}) scale(0.333333)`;

const CityMap = () => (
  <svg width="1188" height="654" viewBox="48 1629 1188 654" display="block">
    <defs>
      {tiles.map((t, i) => (
        <clipPath id={`tile${i}`} key={i}>
          <rect width={t.w} height={t.h} />
        </clipPath>
      ))}
      <radialGradient id="pinFill" cx="0.5" cy="0.42" r="0.62">
        <stop offset="0" stopColor="#ff787b" />
        <stop offset="0.5" stopColor="#fa6064" />
        <stop offset="0.8" stopColor="#ec494f" />
        <stop offset="1" stopColor="#b52f38" />
      </radialGradient>
      <radialGradient id="deepWater">
        <stop offset="0" stopColor="#1e2f76" />
        <stop offset="1" stopColor="#1e3888" stopOpacity="0" />
      </radialGradient>
      <filter id="soft" x="-40%" y="-40%" width="180%" height="180%">
        <feGaussianBlur stdDeviation="9" />
      </filter>
      <clipPath id="photo">
        <circle cx="1092" cy="267" r="88" />
      </clipPath>
      <linearGradient id="dusk" x1="0" y1="0" x2="0" y2="1">
        <stop offset="0" stopColor="#0c1930" />
        <stop offset="0.45" stopColor="#1d3553" />
        <stop offset="0.6" stopColor="#263b58" />
        <stop offset="1" stopColor="#2a5263" />
      </linearGradient>
    </defs>
    {tiles.map((t, i) => (
      <g key={i} transform={place(t)} clipPath={`url(#tile${i})`}>
        <rect width={t.w} height={t.h} fill={C[t.base]} />
        {t.shapes.map(([kind, points], j) => (
          <polygon key={j} points={points} fill={C[kind]} />
        ))}
      </g>
    ))}
    <ellipse cx="1012" cy="1690" rx="30" ry="60" fill="url(#deepWater)" />
    <polygon points="1240,1850 1222,1880 1206,1920 1218,1970 1226,2040 1240,2070" fill="#1d327b" filter="url(#soft)" />
    {tiles.map((t, i) => (
      <g key={i} transform={place(t)} fill="none" strokeLinejoin="round">
        {t.ferry.map((p, j) => (
          <polyline key={j} points={p} stroke="#1c409b" strokeWidth="6" />
        ))}
        {t.minor.map((p, j) => (
          <polyline key={j} points={p} stroke="#636f88" strokeWidth="7.5" />
        ))}
      </g>
    ))}
    {tiles.map((t, i) => (
      <g key={i} transform={place(t)} fill="none" strokeLinejoin="round">
        {t.major.map(([w, p], j) => (
          <polyline key={j} points={p} stroke="#2b3a53" strokeWidth={w + 9} />
        ))}
      </g>
    ))}
    {tiles.map((t, i) => (
      <g key={i} transform={place(t)} fill="none" strokeLinejoin="round">
        {t.major.map(([w, p], j) => (
          <polyline key={j} points={p} stroke="#8a9cc1" strokeWidth={w} />
        ))}
      </g>
    ))}
    <g transform="translate(420 1580) scale(0.333333)" fill="#2b3a53">
      <path d="M470 236L488 263H453ZM489 216L528 264H512L489 238ZM414 293L428 287H514L531 298ZM852 351H884L868 355Z" />
    </g>
    <g transform="translate(420 1930) scale(0.333333)">
      <ellipse cx="635" cy="75" rx="120" ry="100" fill="#16243c" opacity="0.35" filter="url(#soft)" />
      <path
        d="M496 33A126 126 0 0 1 748 33C748 92 707 134 666 153C646 163 638 180 622 205C606 180 598 163 578 153C537 134 496 92 496 33Z"
        fill="url(#pinFill)"
      />
      <circle cx="622" cy="-11" r="37" fill="#6f3134" />
      <path d="M611 30L633 33L629 109Q623 117 616 109Z" fill="#6f2b30" />

      <circle cx="1094" cy="285" r="100" fill="#101a30" opacity="0.4" filter="url(#soft)" />
      <circle cx="1092" cy="267" r="99" fill="#c9d5fc" />
      <g clipPath="url(#photo)">
        <rect x="1000" y="175" width="184" height="184" fill="url(#dusk)" />
        <path d="M1000 268H1184V302H1000Z" fill="#35384d" />
        <path d="M1000 268H1035V284H1000ZM1140 262H1184V276H1140Z" fill="#6d343b" />
        <path d="M1036 262L1046 228L1056 228L1068 262ZM1084 262L1097 222L1110 216L1122 262ZM1126 265L1134 244L1144 265Z" fill="#80504e" opacity="0.35" />
        <path d="M1051 220V270M1036 262L1051 222L1068 262M1042 240H1061M1102 208V272M1084 262L1102 212L1122 262M1093 228H1112M1088 246H1117M1134 240V270M1123 264L1134 242L1146 266" fill="none" stroke="#b0605c" strokeWidth="2" />
        <path d="M1034 262H1066M1086 264H1146" stroke="#d99b72" strokeWidth="5" strokeDasharray="8 5" />
        <path d="M1026 284L1100 272L1180 276V300H1050Z" fill="#364866" />
        <path d="M1098 288H1176" stroke="#8db5dc" strokeWidth="3" strokeDasharray="4 8" />
        <path d="M1012 300Q1080 292 1172 302V314H1016Z" fill="#35694a" />
        <path d="M1018 304H1168" stroke="#8fa566" strokeWidth="4" strokeDasharray="6 5" />
        <path d="M1112 300H1118V312H1112ZM1122 300H1127V312H1122Z" fill="#f4ec7e" />
        <path d="M1008 315H1176V322H1008Z" fill="#3a3a42" />
      </g>
    </g>
  </svg>
);

const Signal = () => (
  <svg width="65" height="43" viewBox="0 0 65 43">
    <rect x="0" y="26" width="11" height="16" rx="3" fill="#fff" />
    <rect x="18" y="19" width="11" height="23" rx="3" fill="#333" />
    <rect x="36" y="10" width="11" height="32" rx="3" fill="#333" />
    <rect x="54" y="1" width="11" height="41" rx="3" fill="#333" />
  </svg>
);

const Wifi = () => (
  <svg width="57" height="43" viewBox="338 72 172 129">
    <path d="M338 109Q374 72 424 72Q475 72 511 109L494 127Q464 99 424 99Q385 99 355 127Z" fill="#333" />
    <path d="M368 141Q392 115 424 115Q457 115 481 141L464 159Q446 142 424 142Q402 142 385 159Z" fill="#fff" />
    <path d="M398 171Q408 158 424 158Q441 158 451 171L424 199Z" fill="#fff" />
  </svg>
);

const details: { term: string; value: string; spacing: number }[] = [
  { term: "IP", value: "109.120.157.170", spacing: 1.05 },
  { term: "City", value: "Stockholm", spacing: -0.2 },
  { term: "Region", value: "Stockholm", spacing: -0.2 },
  { term: "Country", value: "SE", spacing: -0.3 },
  { term: "Location", value: "59.3294,18.0687", spacing: 0.4 },
  { term: "Organization", value: "AS210644 AEZA INTERNATIONAL LTD", spacing: -0.18 },
  { term: "Postal", value: "195 87", spacing: 0.45 },
  { term: "Timezone", value: "Europe/Stockholm", spacing: -0.4 },
];

export default function App() {
  return (
    <Screen>
      <GlobalStyle />
      <StatusBar>
        <Clock>00:11</Clock>
        <Indicators>
          <Signal />
          <Wifi />
          <Battery>
            <BatteryBody>98</BatteryBody>
            <BatteryCap />
          </Battery>
        </Indicators>
      </StatusBar>
      <Details>
        {details.map((d) => (
          <DetailRow key={d.term}>
            <Term>{d.term}</Term>
            <Value $spacing={d.spacing}>{d.value}</Value>
          </DetailRow>
        ))}
      </Details>
      <MapCard>
        <MapClip>
          <CityMap />
          <MapLabel $x={141} $y={324} $size={32} $spacing={2.8} $italic>Kungsholmen</MapLabel>
          <MapLabel $x={-1} $y={453} $size={28} $spacing={1.9} $italic>Stora</MapLabel>
          <MapLabel $x={3} $y={485} $size={28} $spacing={2.1} $italic>singen</MapLabel>
          <MapLabel $x={842} $y={415} $size={28} $spacing={2.1} $italic>Djurgården</MapLabel>
          <MapLabel $x={590} $y={543} $size={36} $spacing={2.6} $squeeze={0.765} $family="Roboto">SÖDERMALM</MapLabel>
          <MapLabel $x={480} $y={376} $size={31} $spacing={0.4} $color="#dde3ea">You are here</MapLabel>
          <MapLabel $x={645} $y={439} $size={24} $spacing={-0.2} $color="#c9d6fd" $halo="#0b0f1a" $haloWidth={6}>VASA MUSEUM</MapLabel>
          <Attribution>
            <AppleMark />
            Maps
            <LegalLink>Legal</LegalLink>
          </Attribution>
        </MapClip>
      </MapCard>
      <HomeIndicator />
    </Screen>
  );
}
